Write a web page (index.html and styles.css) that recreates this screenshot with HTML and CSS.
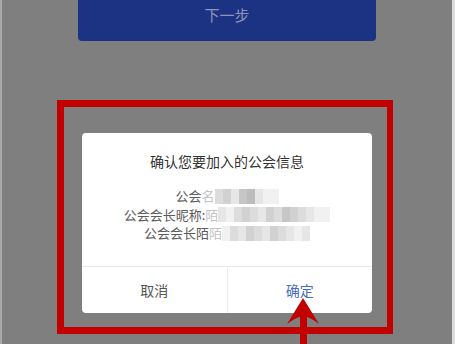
FILE: index.html
```html
<!DOCTYPE html>
<html lang="zh-CN">

<head>
    <meta charset="UTF-8">
    <meta name="viewport" content="width=device-width, initial-scale=1.0">
    <title>确认公会信息</title>
    <link rel="stylesheet" href="styles.css">
</head>

<body>
    <div id="page">
        <button type="button" id="next">下一步</button>

        <div id="highlight">
            <div id="dialog">
                <div id="dialog-body">
                    <h2>确认您要加入的公会信息</h2>
                    <p class="info">公会<span class="fade">名</span><span class="mosaic"><i class="c2"></i><i class="c3"></i><i class="c1"></i><i class="c4"></i><i class="c5"></i><i class="c1"></i><i class="c0"></i><i class="c0"></i></span></p>
                    <p class="info">公会会长昵称:<span class="fade">陌</span><span class="mosaic"><i class="c1"></i><i class="c0"></i><i class="c2"></i><i class="c3"></i><i class="c2"></i><i class="c1"></i><i class="c3"></i><i class="c2"></i><i class="c4"></i><i class="c3"></i><i class="c2"></i><i class="c1"></i><i class="c0"></i><i class="c0"></i></span></p>
                    <p class="info">公会会长陌<span class="fade">陌</span><span class="mosaic"><i class="c0"></i><i class="c2"></i><i class="c1"></i><i class="c3"></i><i class="c2"></i><i class="c1"></i><i class="c3"></i><i class="c2"></i><i class="c1"></i><i class="c0"></i><i class="c1"></i></span></p>
                </div>
                <div id="dialog-actions">
                    <button type="button" class="action">取消</button>
                    <button type="button" class="action confirm">确定</button>
                </div>
            </div>
        </div>

        <svg id="arrow" width="40" height="50" viewBox="0 0 40 50">
            <path d="M19 0 L35 26 Q27 20 23 19 L23 50 L16 50 L16 19 Q11 20 3 26 Z" fill="#c20000" />
        </svg>
    </div>
</body>

</html>
```

FILE: styles.css
```css
* {
    padding: 0;
    margin: 0;
    box-sizing: border-box;
    font-family: 'Noto Sans CJK SC', 'Noto Sans', sans-serif;
}

body {
    width: 455px;
    height: 344px;
    overflow: hidden;
    background: linear-gradient(90deg, #a9a9a9 0 2px, #7f7f7f 2px 452px, #dcdcdc 452px);
}

#page {
    position: relative;
    height: 344px;
    display: flex;
    flex-direction: column;
}

#next {
    margin: -12px 0 0 78px;
    width: 298px;
    height: 53px;
    border: none;
    border-radius: 4px;
    background-color: #1c3282;
    color: #8e96b8;
    font-size: 15px;
    line-height: 53px;
}

#highlight {
    margin: 59px 0 0 57px;
    width: 336px;
    height: 234px;
    border: 7px solid #c20000;
    border-right-width: 6px;
    padding: 26px 14px 14px 18px;
}

#dialog {
    width: 290px;
    height: 180px;
    background-color: #ffffff;
    border-radius: 4px;
    display: flex;
    flex-direction: column;
}

#dialog-body {
    flex: 1;
    padding-top: 18px;
    text-align: center;
}

h2 {
    font-size: 14px;
    font-weight: normal;
    line-height: 20px;
    color: #333333;
    margin-bottom: 16px;
}

.info {
    font-size: 13px;
    line-height: 18.5px;
    color: #5c5c5c;
    white-space: nowrap;
}

.fade {
    color: #c4c4c4;
}

.mosaic {
    display: inline-flex;
    vertical-align: middle;
    height: 15px;
    margin-top: -2px;
}

.mosaic i {
    width: 8px;
    height: 15px;
}

.c0 { background-color: #f1f1f1; }
.c1 { background-color: #e6e6e6; }
.c2 { background-color: #dcdcdc; }
.c3 { background-color: #d1d1d1; }
.c4 { background-color: #c6c6c6; }
.c5 { background-color: #bcbcbc; }

#dialog-actions {
    height: 47px;
    display: flex;
    border-top: 1px solid #e8e8e8;
}

.action {
    flex: 1;
    border: none;
    background: none;
    font-size: 14px;
    color: #555555;
}

.confirm {
    border-left: 1px solid #ececec;
    color: #4a6cc0;
}

#arrow {
    position: absolute;
    left: 284px;
    top: 298px;
}
```
